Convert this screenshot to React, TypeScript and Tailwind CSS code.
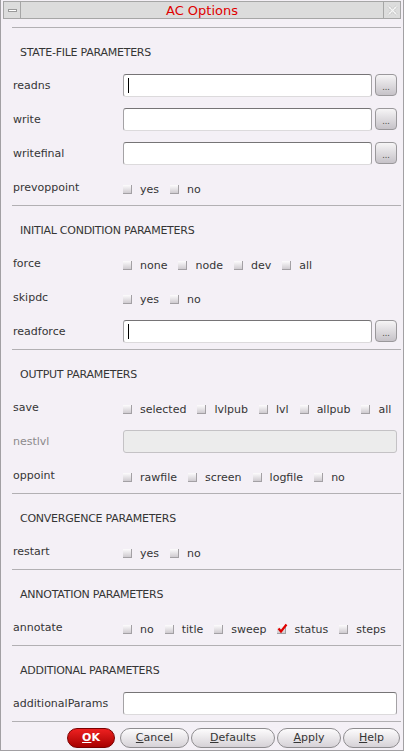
import React from "react";

const Box = ({ checked }: { checked?: boolean }) => (
  <span className="relative block w-[9px] h-[9px] shrink-0 bg-linear-to-b from-[#fdfcfd] to-[#cfcbd0] border-b border-r border-[#a3a0a4]">
    {checked && (
      <svg className="absolute left-[0px] top-[-2px]" width="11" height="11" viewBox="0 0 11 11">
        <path d="M1.5 5.5 L4 8.5 L9.5 1.5" stroke="#e00000" strokeWidth="2.2" fill="none" />
      </svg>
    )}
  </span>
);

const Checks = ({ items, checked }: { items: string[]; checked?: string }) => (
  <div className="flex items-center gap-[11px] pt-[5px]">
    {items.map((t) => (
      <div key={t} className="flex items-center gap-[8px]">
        <Box checked={t === checked} />
        <span className="leading-none">{t}</span>
      </div>
    ))}
  </div>
);

const Input = ({ cursor, button, disabled }: { cursor?: boolean; button?: boolean; disabled?: boolean }) => (
  <div className="flex items-center gap-[3px] w-full">
    <div
      className={
        disabled
          ? "flex-1 h-[23px] bg-[#ececec] border border-[#c4c2c5] rounded-[3px]"
          : "flex-1 h-[23px] bg-white border border-[#a4a2a5] border-t-[#767476] border-b-[#dcdadc] rounded-[3px] flex items-center"
      }
    >
      {cursor && <span className="block w-[1px] h-[15px] bg-black ml-[4px]" />}
    </div>
    {button && (
      <div className="w-[22px] h-[22px] rounded-[4px] border border-[#9a989b] bg-linear-to-b from-[#f6f5f6] to-[#c6c2c8] flex items-end justify-center pb-[3px] text-[8px] leading-none text-[#444]">
        ...
      </div>
    )}
  </div>
);

const Row = ({ label, children, disabled }: { label: string; children?: React.ReactNode; disabled?: boolean }) => (
  <div className="h-[34px] flex items-center">
    <div className={disabled ? "w-[111px] pl-[1px] pt-[2px] text-[#8c8a8c]" : "w-[111px] pl-[1px] pt-[2px] text-[#353535]"}>{label}</div>
    <div className="flex-1 pr-[4px] flex items-center">{children}</div>
  </div>
);

const Section = ({ title, children }: { title: string; children: React.ReactNode }) => (
  <div className="border-t border-[#b2b0b3] pt-[15px] pb-[1px]">
    <div className="h-[20px] flex items-center pl-[8px] pt-[1px] text-[#353535] tracking-[-0.25px]">{title}</div>
    <div className="mt-[5px]">{children}</div>
  </div>
);

const Btn = ({ w, first, rest, ok }: { w: string; first: string; rest: string; ok?: boolean }) => (
  <div
    className={
      ok
        ? `${w} h-[20px] rounded-full border border-[#7a0000] bg-linear-to-b from-[#ee2020] to-[#a80000] flex items-center justify-center text-white font-bold`
        : `${w} h-[20px] rounded-full border border-[#8e8c8f] bg-linear-to-b from-[#fdfcfd] to-[#d6d2d7] flex items-center justify-center text-[#353535]`
    }
  >
    <span>
      <span className="underline">{first}</span>
      {rest}
    </span>
  </div>
);

export default function App() {
  return (
    <div
      className="w-[404px] h-[751px] bg-[#f4f0f6] border-x border-b border-[#a2a0a3] flex flex-col text-[11px] text-[#353535] overflow-hidden"
      style={{ fontFamily: '"DejaVu Sans", sans-serif' }}
    >
      {/* title bar */}
      <div className="h-[20px] pt-[1px] px-[2px] flex bg-[#f4f0f6]">
        <div className="w-[18px] h-[18px] bg-[#dcdcdc] border border-[#a6a6a6] flex items-center justify-center">
          <span className="block w-[9px] h-[3px] bg-white border border-[#9a9a9a]" />
        </div>
        <div className="flex-1 h-[18px] bg-[#dcdcdc] border-y border-r border-[#a6a6a6] flex items-center justify-center text-[13px] text-[#e00000] leading-none">
          AC Options
        </div>
        <div className="w-[17px] h-[18px] bg-[#dcdcdc] border-y border-r border-[#a6a6a6] flex items-center justify-center">
          <svg width="11" height="11" viewBox="0 0 11 11">
            <path d="M1.5 1.5 L9.5 9.5 M9.5 1.5 L1.5 9.5" stroke="#c4c4c4" strokeWidth="3" strokeDasharray="1.5 1" />
            <path d="M1.5 1.5 L9.5 9.5 M9.5 1.5 L1.5 9.5" stroke="#f6f6f6" strokeWidth="1.2" />
          </svg>
        </div>
      </div>

      <div className="mt-[7px] ml-[11px] mr-[2px] flex flex-col">
        <Section title="STATE-FILE PARAMETERS">
          <Row label="readns">
            <Input cursor button />
          </Row>
          <Row label="write">
            <Input button />
          </Row>
          <Row label="writefinal">
            <Input button />
          </Row>
          <Row label="prevoppoint">
            <Checks items={["yes", "no"]} />
          </Row>
        </Section>

        <Section title="INITIAL CONDITION PARAMETERS">
          <Row label="force">
            <Checks items={["none", "node", "dev", "all"]} />
          </Row>
          <Row label="skipdc">
            <Checks items={["yes", "no"]} />
          </Row>
          <Row label="readforce">
            <Input cursor button />
          </Row>
        </Section>

        <Section title="OUTPUT PARAMETERS">
          <Row label="save">
            <Checks items={["selected", "lvlpub", "lvl", "allpub", "all"]} />
          </Row>
          <Row label="nestlvl" disabled>
            <Input disabled />
          </Row>
          <Row label="oppoint">
            <Checks items={["rawfile", "screen", "logfile", "no"]} />
          </Row>
        </Section>

        <Section title="CONVERGENCE PARAMETERS">
          <Row label="restart">
            <Checks items={["yes", "no"]} />
          </Row>
        </Section>

        <Section title="ANNOTATION PARAMETERS">
          <Row label="annotate">
            <Checks items={["no", "title", "sweep", "status", "steps"]} checked="status" />
          </Row>
        </Section>

        <Section title="ADDITIONAL PARAMETERS">
          <Row label="additionalParams">
            <Input />
          </Row>
        </Section>

        <div className="border-t border-[#b2b0b3] pt-[6px] flex justify-end items-center gap-[2px] pr-[1px]">
          <div className="mr-[3px]">
            <Btn w="w-[48px]" first="O" rest="K" ok />
          </div>
          <Btn w="w-[69px]" first="C" rest="ancel" />
          <Btn w="w-[84px]" first="D" rest="efaults" />
          <Btn w="w-[64px]" first="A" rest="pply" />
          <Btn w="w-[57px]" first="H" rest="elp" />
        </div>
      </div>
    </div>
  );
}
